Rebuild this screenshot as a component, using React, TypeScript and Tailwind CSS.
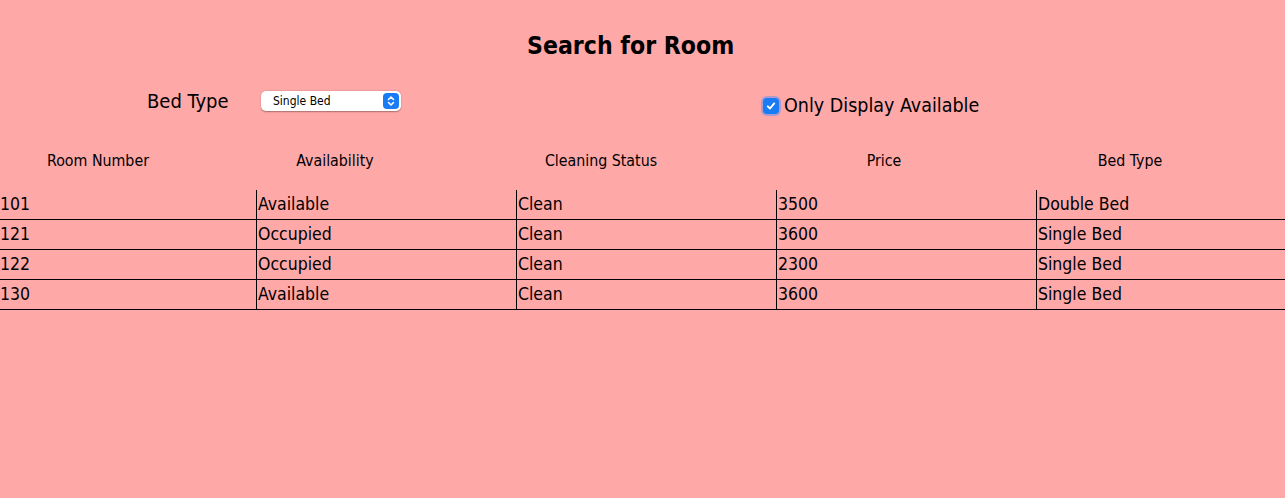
import React from 'react';

const rooms = [
  { no: '101', avail: 'Available', clean: 'Clean', price: '3500', bed: 'Double Bed' },
  { no: '121', avail: 'Occupied', clean: 'Clean', price: '3600', bed: 'Single Bed' },
  { no: '122', avail: 'Occupied', clean: 'Clean', price: '2300', bed: 'Single Bed' },
  { no: '130', avail: 'Available', clean: 'Clean', price: '3600', bed: 'Single Bed' },
];

function App() {
  return (
    <div
      className="min-h-screen w-full bg-[#ffa8a8] text-black overflow-hidden"
      style={{ fontFamily: '"DejaVu Sans Condensed", "DejaVu Sans", sans-serif' }}
    >
      <h1 className="pt-[30px] pl-[527px] text-[24.6px] leading-[32px] font-bold">Search for Room</h1>

      {/* Filters */}
      <div className="mt-[27px] flex items-start h-[40px]">
        <div className="ml-[147px] w-[114px] text-[20px] leading-[24px]">Bed Type</div>
        <div className="relative mt-[2px] w-[140px] h-[20px] bg-white rounded-[5px] shadow-[0_0.5px_1.5px_rgba(0,0,0,0.35)] flex items-center">
          <span className="pl-[12px] text-[12px] leading-none">Single Bed</span>
          <span className="absolute right-[2px] top-[2px] w-[16px] h-[16px] rounded-[4px] bg-[#1a7cf5] flex items-center justify-center">
            <svg width="8" height="12" viewBox="0 0 8 12" fill="none" stroke="white" strokeWidth="1.6" strokeLinecap="round" strokeLinejoin="round">
              <path d="M1.5 4.5 L4 2 L6.5 4.5" />
              <path d="M1.5 7.5 L4 10 L6.5 7.5" />
            </svg>
          </span>
        </div>
        <label className="ml-[362px] mt-[5px] flex items-center gap-[5px] text-[19.5px] leading-[24px]">
          <span className="w-[16px] h-[16px] rounded-[4px] bg-[#1a7cf5] shadow-[0_0_0_2px_rgba(70,140,255,0.45)] flex items-center justify-center">
            <svg width="10" height="10" viewBox="0 0 10 10" fill="none" stroke="white" strokeWidth="1.9" strokeLinecap="round" strokeLinejoin="round">
              <path d="M1.8 5.3 L4 7.5 L8.2 2.4" />
            </svg>
          </span>
          Only Display Available
        </label>
      </div>

      {/* Header */}
      <div className="mt-[22px] grid grid-cols-[196px_278px_254px_312px_180px] text-[15.8px] leading-[20px] text-center">
        <div>Room Number</div>
        <div>Availability</div>
        <div>Cleaning Status</div>
        <div>Price</div>
        <div>Bed Type</div>
      </div>

      {/* Rows */}
      <div className="mt-[19px] w-[1300px]">
        {rooms.map((r) => (
          <div key={r.no} className="grid grid-cols-[256px_260px_260px_260px_264px] h-[30px] border-b border-black text-[17.5px] leading-[29px]">
            <div>{r.no}</div>
            <div className="border-l border-black pl-[1px]">{r.avail}</div>
            <div className="border-l border-black pl-[1px]">{r.clean}</div>
            <div className="border-l border-black pl-[1px]">{r.price}</div>
            <div className="border-l border-black pl-[1px]">{r.bed}</div>
          </div>
        ))}
      </div>
    </div>
  );
}

export default App;
